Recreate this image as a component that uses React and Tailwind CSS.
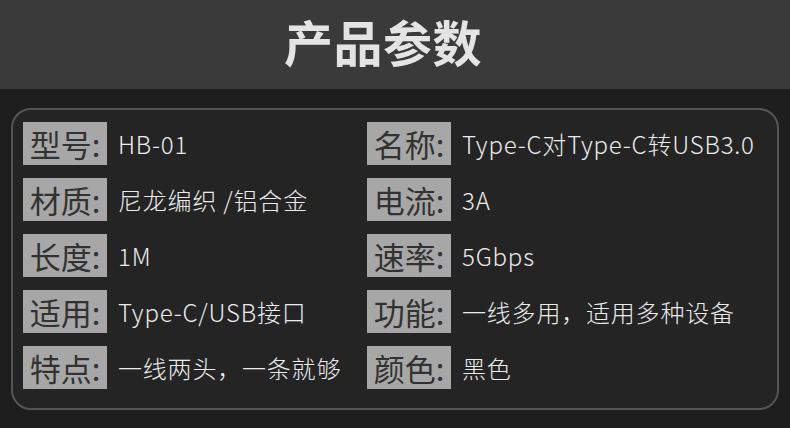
import React from 'react';

const rows = [
    [{ k: '型号', v: 'HB-01' }, { k: '名称', v: 'Type-C对Type-C转USB3.0' }],
    [{ k: '材质', v: '尼龙编织 /铝合金' }, { k: '电流', v: '3A' }],
    [{ k: '长度', v: '1M' }, { k: '速率', v: '5Gbps' }],
    [{ k: '适用', v: 'Type-C/USB接口' }, { k: '功能', v: '一线多用，适用多种设备' }],
    [{ k: '特点', v: '一线两头，一条就够' }, { k: '颜色', v: '黑色' }],
];

const font = { fontFamily: '"Noto Sans CJK SC", "Noto Sans", sans-serif' };

const Spec = ({ k, v }) => (
    <div className="flex items-center h-[43px]">
        <div className="w-[84px] h-[43px] bg-[#a7a7a7] flex items-center justify-center text-[31px] font-normal text-[#323232] leading-none">
            {k}:
        </div>
        <div className="ml-[11px] text-[24px] tracking-[0.8px] text-[#ececec] font-light leading-none">{v}</div>
    </div>
);

export default function App() {
    return (
        <div style={font} className="w-[790px] h-[428px] bg-[#1e1e1e] overflow-hidden">
            <div className="h-[89px] bg-[#3a3a3a] flex items-center justify-center pr-[24px] pb-[8px]">
                <h1 className="text-[49px] font-bold text-[#e4e4e4] leading-none tracking-[0.5px]">产品参数</h1>
            </div>
            <div className="px-[11px] pt-[19px]">
                <div className="h-[302px] rounded-[20px] border-2 border-[#555] bg-[#242424] pl-[10px] pt-[12px]">
                    <div className="grid grid-cols-[344px_1fr] gap-y-[13px]">
                        {rows.map((r, i) => (
                            <React.Fragment key={i}>
                                <Spec {...r[0]} />
                                <Spec {...r[1]} />
                            </React.Fragment>
                        ))}
                    </div>
                </div>
            </div>
        </div>
    );
}
